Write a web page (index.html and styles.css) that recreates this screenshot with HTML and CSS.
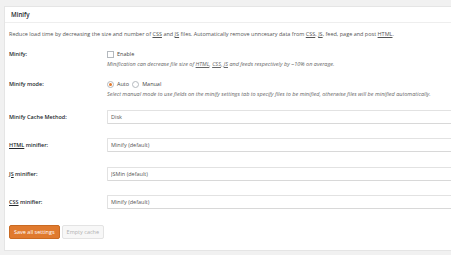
FILE: index.html
```html
<!doctype html>
<html>
  <head>
    <meta name="viewport" content="width=device-width,initial-scale=1.0" />
    <title>Minify settings</title>
    <link rel="stylesheet" href="styles.css">
  </head>
  <body>
    <div class="panel">
      <h3 class="panel-title">Minify</h3>
      <div class="panel-body">
        <p class="intro">Reduce load time by decreasing the size and number of <abbr>CSS</abbr> and <abbr>JS</abbr> files. Automatically remove unncesary data from <abbr>CSS</abbr>, <abbr>JS</abbr>, feed, page and post <abbr>HTML</abbr>.</p>

        <div class="row row-check">
          <label class="row-label" for="minify-enabled">Minify:</label>
          <div class="row-field">
            <div class="choice">
              <input type="checkbox" id="minify-enabled" class="check" />
              <span>Enable</span>
            </div>
            <p class="hint">Minification can decrease file size of <abbr>HTML</abbr>, <abbr>CSS</abbr>, <abbr>JS</abbr> and feeds respectively by ~10% on average.</p>
          </div>
        </div>

        <div class="row row-mode">
          <label class="row-label">Minify mode:</label>
          <div class="row-field">
            <div class="choice">
              <input type="radio" name="mode" class="radio" checked />
              <span>Auto</span>
              <input type="radio" name="mode" class="radio" />
              <span>Manual</span>
            </div>
            <p class="hint">Select manual mode to use fields on the minify settings tab to specify files to be minified, otherwise files will be minified automatically.</p>
          </div>
        </div>

        <div class="row">
          <label class="row-label">Minify Cache Method:</label>
          <div class="row-field">
            <select class="dropdown"><option>Disk</option></select>
          </div>
        </div>

        <div class="row">
          <label class="row-label"><abbr>HTML</abbr> minifier:</label>
          <div class="row-field">
            <select class="dropdown"><option>Minify (default)</option></select>
          </div>
        </div>

        <div class="row">
          <label class="row-label"><abbr>JS</abbr> minifier:</label>
          <div class="row-field">
            <select class="dropdown"><option>JSMin (default)</option></select>
          </div>
        </div>

        <div class="row">
          <label class="row-label"><abbr>CSS</abbr> minifier:</label>
          <div class="row-field">
            <select class="dropdown"><option>Minify (default)</option></select>
          </div>
        </div>

        <div class="actions">
          <button class="btn btn-primary">Save all settings</button>
          <button class="btn btn-disabled" disabled>Empty cache</button>
        </div>
      </div>
    </div>
  </body>
</html>
```

FILE: styles.css
```css
body {
  margin: 0;
  padding: 6px 0 0 4px;
  background: #f1f1f1;
  font-family: 'Open Sans', 'Noto Sans', Arial, sans-serif;
  font-size: 5.5px;
  color: #555;
  overflow: hidden;
}

.panel {
  background: #fff;
  border: 1px solid #e5e5e5;
  border-right: none;
  width: 460px;
  height: 245px;
  box-sizing: border-box;
}

.panel-title {
  margin: 0;
  height: 16px;
  line-height: 15px;
  padding: 0 6px;
  font-size: 6.2px;
  font-weight: 600;
  color: #23282d;
  border-bottom: 1px solid #eee;
  box-sizing: border-box;
}

.panel-body {
  padding: 0 0 0 4px;
}

.intro {
  margin: 0;
  padding-top: 7px;
  line-height: 8px;
}

abbr {
  text-decoration: underline;
  text-decoration-thickness: 0.5px;
  text-underline-offset: 1px;
}

/* settings rows */
.row {
  display: flex;
  align-items: flex-start;
  height: 28.5px;
}
.row-check {
  margin-top: 12px;
  height: 30px;
}
.row-mode {
  height: 29.5px;
}
.row-label {
  width: 98px;
  flex-shrink: 0;
  font-weight: 600;
  color: #23282d;
  line-height: 14px;
}
.row-check .row-label,
.row-mode .row-label {
  line-height: 8px;
}
.row-field {
  flex-grow: 1;
}

.choice {
  display: flex;
  align-items: center;
  height: 8px;
  gap: 3px;
  color: #444;
}

.check,
.radio {
  appearance: none;
  margin: 0;
  width: 7px;
  height: 7px;
  border: 1px solid #b4b9be;
  background: #fff;
  box-sizing: border-box;
}
.radio {
  border-radius: 50%;
  display: grid;
  place-content: center;
}
.radio:checked::before {
  content: '';
  width: 3px;
  height: 3px;
  border-radius: 50%;
  background: #e2792c;
}

.hint {
  margin: 2px 0 0;
  line-height: 8px;
  font-style: italic;
  color: #666;
}

.dropdown {
  appearance: none;
  width: 360px;
  height: 14px;
  margin: 0;
  padding: 0 3px;
  border: 1px solid #e2e2e2;
  border-bottom-color: #d8d8d8;
  border-radius: 1px;
  background: #fff;
  font: inherit;
  color: #555;
}

.actions {
  display: flex;
  gap: 2px;
  margin-top: 1.5px;
}
.btn {
  height: 14px;
  padding: 0 4px;
  border-radius: 2px;
  font: inherit;
  cursor: pointer;
}
.btn-primary {
  background: #e07a2e;
  border: 1px solid #c96a22;
  color: #fff;
}
.btn-disabled {
  background: #f7f7f7;
  border: 1px solid #e3e3e3;
  color: #b0b0b0;
}
```
